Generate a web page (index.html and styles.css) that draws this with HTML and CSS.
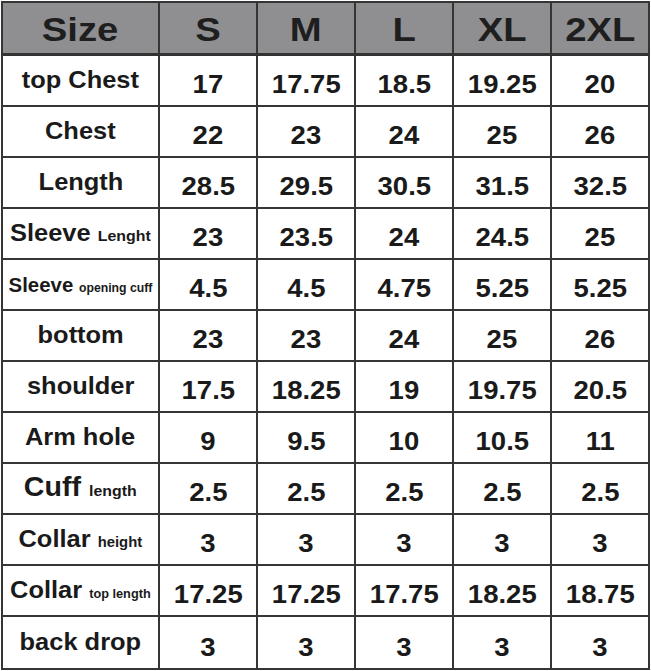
FILE: index.html
```html
<!DOCTYPE html>
<html>
<head>
<meta charset="utf-8">
<link rel="stylesheet" href="styles.css">
</head>
<body>
<table class="chart">
  <colgroup>
    <col class="c-label"><col class="c-size"><col class="c-size"><col class="c-size"><col class="c-size"><col class="c-size">
  </colgroup>
  <thead>
    <tr class="head">
      <th><span class="t">Size</span></th>
      <th><span class="t">S</span></th>
      <th><span class="t">M</span></th>
      <th><span class="t">L</span></th>
      <th><span class="t">XL</span></th>
      <th><span class="t">2XL</span></th>
    </tr>
  </thead>
  <tbody>
    <tr><td class="lab"><span class="t">top Chest</span></td><td><span class="t">17</span></td><td><span class="t">17.75</span></td><td><span class="t">18.5</span></td><td><span class="t">19.25</span></td><td><span class="t">20</span></td></tr>
    <tr><td class="lab"><span class="t">Chest</span></td><td><span class="t">22</span></td><td><span class="t">23</span></td><td><span class="t">24</span></td><td><span class="t">25</span></td><td><span class="t">26</span></td></tr>
    <tr><td class="lab"><span class="t">Length</span></td><td><span class="t">28.5</span></td><td><span class="t">29.5</span></td><td><span class="t">30.5</span></td><td><span class="t">31.5</span></td><td><span class="t">32.5</span></td></tr>
    <tr><td class="lab"><span class="t">Sleeve <small class="s1">Lenght</small></span></td><td><span class="t">23</span></td><td><span class="t">23.5</span></td><td><span class="t">24</span></td><td><span class="t">24.5</span></td><td><span class="t">25</span></td></tr>
    <tr><td class="lab"><span class="t sm">Sleeve <small class="s3">opening cuff</small></span></td><td><span class="t">4.5</span></td><td><span class="t">4.5</span></td><td><span class="t">4.75</span></td><td><span class="t">5.25</span></td><td><span class="t">5.25</span></td></tr>
    <tr><td class="lab"><span class="t">bottom</span></td><td><span class="t">23</span></td><td><span class="t">23</span></td><td><span class="t">24</span></td><td><span class="t">25</span></td><td><span class="t">26</span></td></tr>
    <tr><td class="lab"><span class="t">shoulder</span></td><td><span class="t">17.5</span></td><td><span class="t">18.25</span></td><td><span class="t">19</span></td><td><span class="t">19.75</span></td><td><span class="t">20.5</span></td></tr>
    <tr><td class="lab"><span class="t">Arm hole</span></td><td><span class="t">9</span></td><td><span class="t">9.5</span></td><td><span class="t">10</span></td><td><span class="t">10.5</span></td><td><span class="t">11</span></td></tr>
    <tr><td class="lab"><span class="t lg">Cuff <small class="s1">length</small></span></td><td><span class="t">2.5</span></td><td><span class="t">2.5</span></td><td><span class="t">2.5</span></td><td><span class="t">2.5</span></td><td><span class="t">2.5</span></td></tr>
    <tr><td class="lab"><span class="t">Collar <small class="s2">height</small></span></td><td><span class="t">3</span></td><td><span class="t">3</span></td><td><span class="t">3</span></td><td><span class="t">3</span></td><td><span class="t">3</span></td></tr>
    <tr><td class="lab"><span class="t">Collar <small class="s3">top length</small></span></td><td><span class="t">17.25</span></td><td><span class="t">17.25</span></td><td><span class="t">17.75</span></td><td><span class="t">18.25</span></td><td><span class="t">18.75</span></td></tr>
    <tr class="last"><td class="lab"><span class="t">back drop</span></td><td><span class="t">3</span></td><td><span class="t">3</span></td><td><span class="t">3</span></td><td><span class="t">3</span></td><td><span class="t">3</span></td></tr>
  </tbody>
</table>
</body>
</html>
```
FILE: styles.css
```css
html, body {
  margin: 0;
  padding: 0;
  background: #ffffff;
}
body {
  padding: 1px 0 0 1px;
}
.chart {
  border-collapse: collapse;
  table-layout: fixed;
  width: 648px;
  font-family: "Liberation Sans", Arial, sans-serif;
  font-weight: bold;
  color: #1a1a1a;
  border: 2px solid #555;
}
.c-label { width: 157px; }
.c-size { width: 98px; }
.chart th, .chart td {
  border: 2px solid #353535;
  padding: 0;
  text-align: center;
  vertical-align: middle;
  white-space: nowrap;
  overflow: hidden;
}
.head th {
  background: #8f8f91;
  height: 47px;
  padding-top: 3px;
  font-size: 33px;
  font-weight: bold;
  color: #1e1e1e;
  border-bottom: 3px solid #333;
}
.chart td {
  height: 41px;
  padding-top: 8px;
  font-size: 25px;
}
.chart td.lab {
  height: 47px;
  padding-top: 0;
  padding-bottom: 2px;
}
.last td {
  height: 41px;
  padding-top: 10px;
}
.last td.lab {
  height: 49px;
  padding-top: 0;
  padding-bottom: 2px;
}
.t {
  display: inline-block;
  transform: scaleX(1.1);
}
.head .t {
  transform: scaleX(1.16);
}
.lab .t {
  font-size: 24px;
  transform: scaleX(1.06);
}
.lab .t.sm {
  font-size: 20px;
  transform: scaleX(1.02);
}
.lab .t.lg {
  font-size: 27px;
}
small {
  font-weight: bold;
}
.s1 { font-size: 15px; }
.s2 { font-size: 14px; }
.s3 { font-size: 12px; }
```
